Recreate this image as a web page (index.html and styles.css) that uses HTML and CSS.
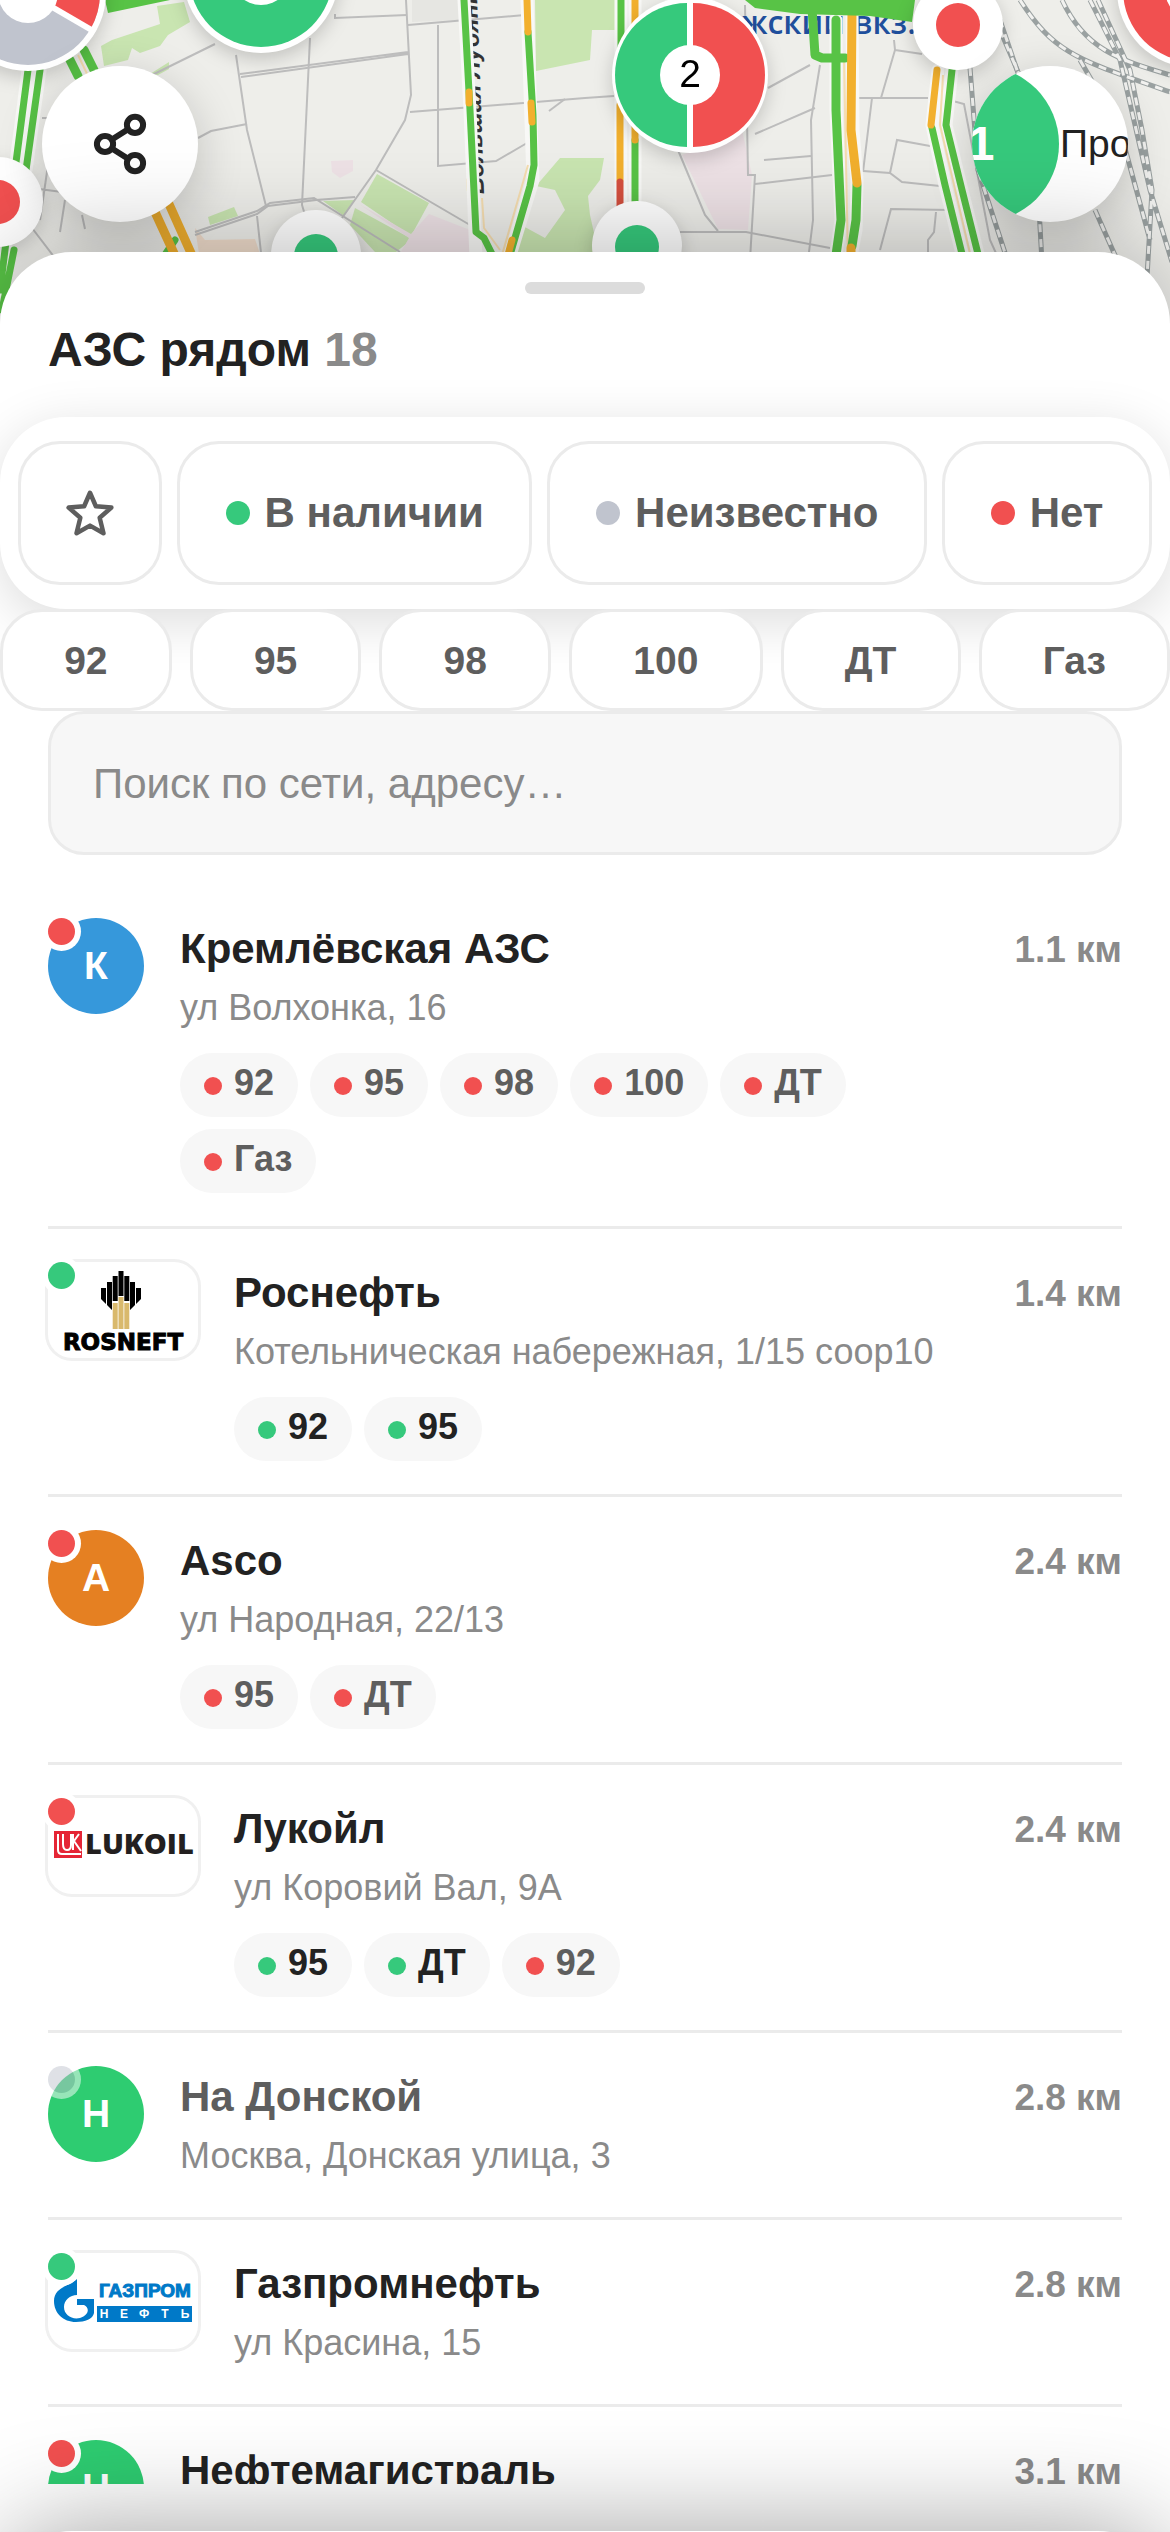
FILE: index.html
```html
<!DOCTYPE html>
<html lang="ru">
<head>
    <meta charset="UTF-8">
    <meta name="viewport" content="width=device-width, initial-scale=1">
    <title>АЗС рядом</title>
    <link rel="stylesheet" href="styles.css">
</head>
<body>
<div class="app">
    <div class="map">
        <svg class="map-canvas" viewBox="0 0 1170 330" preserveAspectRatio="xMidYMin slice" aria-hidden="true">
            <rect width="1170" height="330" fill="#eeeeea"/>
            <!-- blocks -->
            <g fill="#c9e5b1">
                <path d="M157 6L184 2L190 22L168 35L160 46L140 53L132 48L128 60L104 66L101 46L112 40L160 24Z"/>
                <path d="M150 74L169 62V69L158 75Z"/>
                <path d="M535 0H615V30H592L590 60L536 71Z"/>
                <path d="M377 174L429 203L411 236L361 202Z"/>
                <path d="M323 201L355 200L344 216Z"/>
                <path d="M355 208L410 238L406 244L396 252H375L350 225Z"/>
                <path d="M208 217L234 207L238 216L210 225Z"/>
                <path d="M560 158H604L600 180L588 196L590 215L600 260H515L523 226L545 238L565 210L555 190L536 186Z"/>
            </g>
            <g fill="#eee2e6">
                <path d="M331 161L353 160V171L340 178L332 172Z"/>
                <path d="M359 204L411 234L429 214L470 230V262H395L409 238Z"/>
                <path d="M682 155L742 130L752 175L748 230L718 229Z"/>
            </g>
            <path d="M195 228L205 240L255 239L262 260H200Z" fill="#efdccb"/>
            <path d="M412 0H460V20L412 22Z" fill="#e6e6e2"/>
            <!-- small streets -->
            <g fill="none" stroke="#bdbdbd" stroke-width="2">
                <path d="M335 14V18L407 15M236 55L247 130L266 206M310 38L302 205L305 215"/>
                <path d="M240 74L408 52M241 77L408 54M406 0L411 95L405 120L376 170L342 218M146 78L215 44"/>
                <path d="M408 25L525 15M438 25V166L496 161L527 143M410 112L585 98L614 96M376 170L470 225"/>
                <path d="M198 138L211 131L247 124M195 235L257 214L268 206L316 200L355 197M195 232L257 211L270 203L314 198L400 252M42 118H60"/>
                <path d="M39 189L62 192M65 200L60 232M82 215L85 229M32 228L58 262M48 165L40 220M257 216L262 262"/>
                <path d="M745 5L748 175L755 175L750 260M820 65L811 120L813 220L808 260M755 134L815 108M768 88L810 65"/>
                <path d="M678 150L705 215L718 231M680 232H746L830 248M755 184L832 175M764 160L811 156M872 98L863 172M858 98H928"/>
                <path d="M894 40L895 50L881 98M895 50L922 54M863 171L890 173L902 182L940 186M890 173L897 140L930 146M880 250L891 209L950 210M936 212L934 232L928 240V262M953 101L964 104L990 240L1000 262"/>
                <path d="M549 111L565 99"/>
            </g>
            <!-- railway -->
            <g fill="none" stroke="#9aa1a1" stroke-width="5">
                <path d="M970 68L978 170L1008 262M1000 30L1030 100M1020 0C1055 55 1080 60 1170 92M1062 0C1085 50 1120 60 1170 75"/>
                <path d="M1090 0L1120 60L1150 190L1172 262M1098 0L1130 70L1142 130L1152 190L1144 330M1000 20L1034 120L1042 262M1080 60L1120 130L1150 240"/>
                <path d="M1095 210L1118 262"/>
            </g>
            <g fill="none" stroke="#f2f2f0" stroke-width="3" stroke-dasharray="8 7">
                <path d="M970 68L978 170L1008 262M1000 30L1030 100M1020 0C1055 55 1080 60 1170 92M1062 0C1085 50 1120 60 1170 75"/>
                <path d="M1090 0L1120 60L1150 190L1172 262M1098 0L1130 70L1142 130L1152 190L1144 330M1000 20L1034 120L1042 262M1080 60L1120 130L1150 240"/>
                <path d="M1095 210L1118 262"/>
            </g>
            <!-- labels -->
            <text class="map-street" transform="translate(484 194) rotate(-92)">Большая Лубянка</text>
            <text class="map-station" x="916" y="34" text-anchor="end">Рижский вкз.</text>
            <!-- road casings -->
            <g class="road-casing">
                <path d="M464 0L470 110L476 258L484 266L494 290M527 0L533 180L508 262"/>
                <path d="M621 0V200M635 0V200M836 20V110L841 220L835 262M852 10L853 130L857 180L856 230L850 262"/>
                <path d="M28 70L15 170L0 290M40 70L26 170M938 70L932 125L945 185L964 262M952 70L946 125L962 190L980 262"/>
            </g>
            <g fill="none" stroke="#f5ddb0" stroke-width="2">
                <path d="M482 198L484 228L500 250M528 165L500 262M844 60L848 262M943 75L940 125L972 262M78 55L90 80"/>
            </g>
            <!-- traffic -->
            <g class="road road-free">
                <path d="M464 0L470 110L476 232L484 238L494 258"/>
                <path d="M528 32L533 115L534 165L530 186L508 262"/>
                <path d="M28 70L15 170L0 290M40 70L26 170M14 250L2 310M175 240L160 262"/>
                <path d="M621 0V60M635 140V210M932 128L945 185L964 262M952 70L946 125L962 190L980 262"/>
            </g>
            <g class="road road-slow">
                <path d="M469 92V103M527 0L528 32M531 103L532 122M512 240L506 262"/>
                <path d="M635 0V140M620 105V180M937 70L931 125"/>
            </g>
            <path class="road" d="M620 182V206" stroke="#d5503f"/>
            <g class="road road-free road-wide">
                <path d="M70 60L78 76M84 50L94 70M812 8L815 55L822 58H845M836 20V110L841 220L835 262"/>
                <path d="M857 185L856 220L852 246"/>
            </g>
            <g class="road road-slow road-wide">
                <path d="M852 10L851 130L857 183M155 212L178 262M169 204L195 262M851 248V262"/>
            </g>
            <path d="M105 0H170L108 13Z" fill="#58c346"/>
            <path d="M745 0H915L912 22L870 16L800 14L755 8Z" fill="#58c346"/>
            <!-- clusters and pins -->
            <g class="pin-shadow">
                <circle cx="28" cy="-7" r="78" fill="#fff"/>
                <circle cx="28" cy="-7" r="72" fill="#c0c4ce"/>
                <path d="M28 -7L90 30A72 72 0 0 0 100 -7Z" fill="#f15050"/>
                <path d="M28 -7L95 32" stroke="#fff" stroke-width="6"/>
                <circle cx="28" cy="-7" r="30" fill="#fff"/>
                <circle cx="261" cy="-25" r="78" fill="#fff"/>
                <circle cx="261" cy="-25" r="72" fill="#36c97c"/>
                <circle cx="261" cy="-25" r="30" fill="#fff"/>
                <circle cx="1195" cy="-10" r="78" fill="#fff"/>
                <circle cx="1195" cy="-10" r="72" fill="#f15050"/>
                <circle cx="1195" cy="-10" r="30" fill="#fff"/>
                <circle cx="690" cy="75" r="78" fill="#fff"/>
                <path d="M687 3A72 72 0 0 0 687 147Z" fill="#36c97c"/>
                <path d="M693 3A72 72 0 0 1 693 147Z" fill="#f15050"/>
                <circle cx="690" cy="75" r="30" fill="#fff"/>
                <text class="cluster-count" x="690" y="87">2</text>
            </g>
            <g class="pin-shadow" fill="#fff">
                <circle cx="-2" cy="202" r="45"/>
                <circle cx="316" cy="255" r="45"/>
                <circle cx="637" cy="246" r="45"/>
                <circle cx="958" cy="25" r="45"/>
            </g>
            <circle cx="-2" cy="202" r="22" fill="#f15050"/>
            <circle cx="316" cy="256" r="22" fill="#36c97c"/>
            <circle cx="637" cy="247" r="22" fill="#36c97c"/>
            <circle cx="958" cy="25" r="22" fill="#f15050"/>
        </svg>
        <div class="map-buttons">
            <button class="round-btn" type="button" aria-label="Поделиться">
                <svg width="72" height="72" viewBox="0 0 24 24" fill="none" stroke="#222" stroke-width="2">
                    <circle cx="17" cy="5.6" r="2.7"/>
                    <circle cx="17" cy="18.4" r="2.7"/>
                    <circle cx="7" cy="12" r="2.7"/>
                    <path d="M9.3 10.5L14.7 7.1M9.3 13.5L14.7 16.9"/>
                </svg>
            </button>
            <button class="round-btn profile-btn" type="button">
                <span class="profile-badge">1</span>
                <span>Профиль</span>
            </button>
        </div>
    </div>

    <main class="sheet">
        <div class="handle"></div>
        <h1>АЗС рядом <span>18</span></h1>

        <div class="status-filter">
            <button class="chip chip-icon" type="button" aria-label="Избранное">
                <svg width="54" height="54" viewBox="0 0 24 24" fill="none" stroke="#5e5e5e" stroke-width="2" stroke-linejoin="round">
                    <path d="M12 3L14.6 9L21.5 9.6L16.3 14.1L18 21L12 17.6L6 21L7.7 14.1L2.5 9.6L9.4 9Z"/>
                </svg>
            </button>
            <button class="chip" type="button"><i class="dot yes"></i>В наличии</button>
            <button class="chip" type="button"><i class="dot unknown"></i>Неизвестно</button>
            <button class="chip" type="button"><i class="dot no"></i>Нет</button>
        </div>

        <div class="fuel-filter">
            <button type="button">92</button>
            <button type="button">95</button>
            <button type="button">98</button>
            <button type="button">100</button>
            <button type="button">ДТ</button>
            <button type="button">Газ</button>
        </div>

        <div class="search">
            <input type="text" placeholder="Поиск по сети, адресу…" aria-label="Поиск по сети, адресу">
        </div>

        <ul class="stations">
            <li class="station">
                <div class="brand blue">К<i class="mark no"></i></div>
                <div class="info">
                    <div class="name">Кремлёвская АЗС</div>
                    <div class="address">ул Волхонка, 16</div>
                    <div class="fuels">
                        <span class="fuel"><i class="no"></i>92</span>
                        <span class="fuel"><i class="no"></i>95</span>
                        <span class="fuel"><i class="no"></i>98</span>
                        <span class="fuel"><i class="no"></i>100</span>
                        <span class="fuel"><i class="no"></i>ДТ</span>
                        <span class="fuel"><i class="no"></i>Газ</span>
                    </div>
                </div>
                <div class="distance">1.1 км</div>
            </li>
            <li class="station">
                <div class="brand logo">
                    <svg width="150" height="96" viewBox="0 0 150 96" role="img" aria-label="Rosneft">
                        <path d="M70.5 9h5v25h-5zM64.7 14h5v25h-5zM76.3 14h5v25h-5zM59 20h5v28l-5-5zM82 20h5v23l-5 5zM53 26h5v16l-5-5zM88 26h5v11l-5 5z"/>
                        <path d="M70.5 35h5v32h-5zM64.7 41h5v26h-5zM76.3 41h5v26h-5z" fill="#d9b96c"/>
                        <text class="rosneft" x="75" y="88">ROSNEFT</text>
                    </svg>
                    <i class="mark yes"></i>
                </div>
                <div class="info">
                    <div class="name">Роснефть</div>
                    <div class="address">Котельническая набережная, 1/15 соор10</div>
                    <div class="fuels">
                        <span class="fuel has"><i class="yes"></i>92</span>
                        <span class="fuel has"><i class="yes"></i>95</span>
                    </div>
                </div>
                <div class="distance">1.4 км</div>
            </li>
            <li class="station">
                <div class="brand orange">A<i class="mark no"></i></div>
                <div class="info">
                    <div class="name">Asco</div>
                    <div class="address">ул Народная, 22/13</div>
                    <div class="fuels">
                        <span class="fuel"><i class="no"></i>95</span>
                        <span class="fuel"><i class="no"></i>ДТ</span>
                    </div>
                </div>
                <div class="distance">2.4 км</div>
            </li>
            <li class="station">
                <div class="brand logo">
                    <svg width="150" height="96" viewBox="0 0 150 96" role="img" aria-label="Lukoil">
                        <rect x="6" y="33" width="28" height="27" fill="#e52535"/>
                        <path d="M10 36V52Q10 56 14 56H33M15 36V46Q15 52 19 52Q23 52 23 47V36M25 36V52M31 36L26 43L33 53" fill="none" stroke="#fff" stroke-width="2"/>
                        <text class="lukoil" x="37" y="56">LUKOIL</text>
                    </svg>
                    <i class="mark no"></i>
                </div>
                <div class="info">
                    <div class="name">Лукойл</div>
                    <div class="address">ул Коровий Вал, 9А</div>
                    <div class="fuels">
                        <span class="fuel has"><i class="yes"></i>95</span>
                        <span class="fuel has"><i class="yes"></i>ДТ</span>
                        <span class="fuel"><i class="no"></i>92</span>
                    </div>
                </div>
                <div class="distance">2.4 км</div>
            </li>
            <li class="station muted">
                <div class="brand green">Н<i class="mark unknown"></i></div>
                <div class="info">
                    <div class="name">На Донской</div>
                    <div class="address">Москва, Донская улица, 3</div>
                </div>
                <div class="distance">2.8 км</div>
            </li>
            <li class="station">
                <div class="brand logo">
                    <svg width="150" height="96" viewBox="0 0 150 96" role="img" aria-label="Газпромнефть">
                        <path d="M29 26C22 33 6 34 6 48C6 60 15 69 28 69C37 69 45 66 46 60V46H29V52H36C42 55 41 62 32 65C24 67 16 62 16 54C16 47 22 42 29 42Z" fill="#0079c8"/>
                        <text class="gazprom" x="97" y="44">ГАЗПРОМ</text>
                        <rect x="49" y="53" width="95" height="16" fill="#0079c8"/>
                        <g class="neft">
                            <text x="56" y="65">Н</text>
                            <text x="76" y="65">Е</text>
                            <text x="96" y="65">Ф</text>
                            <text x="117" y="65">Т</text>
                            <text x="137" y="65">Ь</text>
                        </g>
                    </svg>
                    <i class="mark yes"></i>
                </div>
                <div class="info">
                    <div class="name">Газпромнефть</div>
                    <div class="address">ул Красина, 15</div>
                </div>
                <div class="distance">2.8 км</div>
            </li>
            <li class="station">
                <div class="brand green">Н<i class="mark no"></i></div>
                <div class="info">
                    <div class="name">Нефтемагистраль</div>
                </div>
                <div class="distance">3.1 км</div>
            </li>
        </ul>
    </main>
    <div class="bottom-sheet"></div>
</div>
</body>
</html>
```
FILE: styles.css
```css
* {
    box-sizing: border-box;
}
body {
    margin: 0;
    font-family: "Liberation Sans", Arial, sans-serif;
    color: #222;
    background: #fff;
}
button, input {
    font-family: inherit;
}
.app {
    position: relative;
    display: flex;
    flex-direction: column;
    height: 100vh;
    overflow: hidden;
}

/* map */
.map {
    position: relative;
    flex: none;
    height: 330px;
    margin-bottom: -78px;
    overflow: hidden;
}
.map-canvas {
    display: block;
    width: 100%;
    height: 100%;
}
.road-casing, .road {
    fill: none;
    stroke-linecap: round;
    stroke-linejoin: round;
}
.road-casing {
    stroke: #f8f8f6;
    stroke-width: 13px;
}
.road {
    stroke-width: 7px;
}
.road-free {
    stroke: #58c346;
}
.road-slow {
    stroke: #f2b02e;
}
.road-wide {
    stroke-width: 9px;
}
.map-street {
    font-size: 24px;
    font-weight: bold;
    font-style: italic;
    fill: #333;
}
.map-station {
    font-family: "Open Sans", sans-serif;
    font-size: 32px;
    font-weight: 600;
    fill: #1f4f9c;
}
.cluster-count {
    font-size: 39px;
    text-anchor: middle;
}
.pin-shadow {
    filter: drop-shadow(0 6px 9px rgba(0, 0, 0, 0.18));
}
.map-buttons {
    position: absolute;
    top: 66px;
    left: 42px;
    right: 42px;
    display: flex;
    justify-content: space-between;
}
.round-btn {
    display: flex;
    align-items: center;
    justify-content: center;
    width: 156px;
    height: 156px;
    padding: 0;
    border: none;
    border-radius: 50%;
    background: #fff;
    color: #222;
    font-size: 39px;
    overflow: hidden;
    box-shadow: 0 12px 48px rgba(0, 0, 0, 0.2);
}
.profile-btn {
    justify-content: flex-start;
}
.profile-badge {
    flex: none;
    width: 156px;
    margin-left: -69px;
    margin-right: 1px;
    border-radius: 50%;
    background: #36c97c;
    color: #fff;
    font-weight: bold;
    font-size: 48px;
    line-height: 156px;
    text-align: center;
}

/* sheet */
.sheet {
    position: relative;
    flex: 1;
    min-height: 0;
    display: flex;
    flex-direction: column;
    padding: 30px 0 48px;
    border-radius: 72px 72px 0 0;
    background: #fff;
    box-shadow: 0 -12px 96px rgba(0, 0, 0, 0.25);
}
.handle {
    flex: none;
    align-self: center;
    width: 120px;
    height: 12px;
    border-radius: 6px;
    background: #dcdcdc;
}
h1 {
    margin: 26px 48px 37px;
    font-size: 48px;
    line-height: 60px;
}
h1 span {
    color: #8a8a8a;
}
.status-filter {
    display: flex;
    gap: 15px;
    padding: 24px 18px;
    border-radius: 66px;
    background: #fff;
    box-shadow: 0 12px 54px rgba(0, 0, 0, 0.14);
}
.chip {
    flex: 1 1 auto;
    display: flex;
    align-items: center;
    justify-content: center;
    gap: 15px;
    height: 144px;
    padding: 0 44px;
    border: 3px solid #ebebeb;
    border-radius: 42px;
    background: #fff;
    color: #5e5e5e;
    font-size: 42px;
    font-weight: bold;
    white-space: nowrap;
}
.chip-icon {
    flex: none;
    width: 144px;
    padding: 0;
}
.dot {
    width: 24px;
    height: 24px;
    border-radius: 50%;
}
.yes {
    background: #36c97c;
}
.no {
    background: #f15050;
}
.unknown {
    background: #c0c4ce;
}
.fuel-filter {
    display: flex;
    gap: 18px;
}
.fuel-filter button {
    flex: 1 1 auto;
    height: 102px;
    padding: 2px 54px 0;
    border: 3px solid #ebebeb;
    border-radius: 42px;
    background: #fff;
    color: #5e5e5e;
    font-size: 39px;
    font-weight: bold;
}
.search {
    padding: 0 48px 30px;
}
.search input {
    display: block;
    width: 100%;
    height: 144px;
    padding: 2px 42px 0;
    border: 3px solid #ebebeb;
    border-radius: 36px;
    background: #f7f7f7;
    font-size: 42px;
}
.search input::placeholder {
    color: #8a8a8a;
}

/* list */
.stations {
    flex: 1;
    min-height: 0;
    overflow: hidden;
    margin: 0;
    padding: 0 48px;
    list-style: none;
}
.station {
    display: flex;
    align-items: flex-start;
    gap: 36px;
    padding: 33px 0;
    border-bottom: 3px solid #ebebeb;
}
.brand {
    position: relative;
    flex: none;
    width: 96px;
    height: 96px;
    border-radius: 50%;
    color: #fff;
    font-size: 39px;
    font-weight: bold;
    line-height: 96px;
    text-align: center;
}
.blue {
    background: #3698db;
}
.orange {
    background: #e58022;
}
.green {
    background: #2ecc71;
}
.logo {
    width: 150px;
    border-radius: 24px;
    background: #fff;
    box-shadow: 0 0 0 3px #f0f0f0;
}
.logo svg {
    display: block;
}
.mark {
    position: absolute;
    top: 0;
    left: 0;
    width: 27px;
    height: 27px;
    border-radius: 50%;
    box-shadow: 0 0 0 6px #fff;
}
.muted .mark {
    opacity: 0.5;
}
.info {
    flex: 1;
    min-width: 0;
}
.name {
    font-size: 42px;
    font-weight: bold;
    line-height: 62px;
}
.muted .name {
    color: #5e5e5e;
}
.address {
    color: #8a8a8a;
    font-size: 36px;
    line-height: 56px;
}
.fuels {
    display: flex;
    flex-wrap: wrap;
    gap: 12px;
    margin-top: 17px;
}
.fuel {
    display: flex;
    align-items: baseline;
    gap: 12px;
    padding: 10px 24px 14px;
    border-radius: 32px;
    background: #f7f7f7;
    color: #5e5e5e;
    font-size: 36px;
    font-weight: bold;
    line-height: 40px;
}
.fuel i {
    width: 18px;
    height: 18px;
    border-radius: 50%;
}
.fuel.has {
    color: #222;
}
.distance {
    color: #8a8a8a;
    font-size: 37px;
    font-weight: bold;
    line-height: 64px;
    white-space: nowrap;
}
.rosneft {
    font: bold 23px "DejaVu Sans", sans-serif;
    text-anchor: middle;
    stroke: #000;
    stroke-width: 1px;
}
.lukoil {
    font: 800 29px "Open Sans", sans-serif;
    fill: #231f20;
}
.gazprom {
    font: bold 19px "Liberation Sans", sans-serif;
    text-anchor: middle;
    fill: #0079c8;
    stroke: #0079c8;
    stroke-width: 1px;
}
.neft {
    font-size: 12px;
    font-weight: bold;
    fill: #fff;
    text-anchor: middle;
}

/* collapsed panel, only its edge is on screen */
.bottom-sheet {
    position: absolute;
    left: 0;
    right: 0;
    bottom: -190px;
    height: 191px;
    border-radius: 72px;
    background: #fff;
    box-shadow: 0 0 108px rgba(0, 0, 0, 0.38);
}
```
